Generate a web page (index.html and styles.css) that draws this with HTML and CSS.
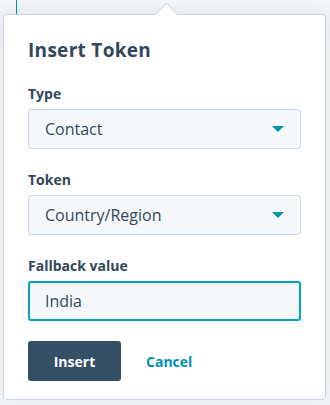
FILE: index.html
```html
<!DOCTYPE html>
<html lang="en">
<head>
    <meta charset="UTF-8">
    <meta name="viewport" content="width=device-width, initial-scale=1.0">
    <title>Insert Token</title>
    <link rel="stylesheet" href="styles.css">
</head>
<body>
    <div class="backdrop">
        <div class="edge-line"></div>
    </div>

    <div class="popover">
        <h2 class="title">Insert Token</h2>

        <div class="field">
            <label class="label">Type</label>
            <div class="select">
                <span>Contact</span>
                <span class="caret"></span>
            </div>
        </div>

        <div class="field">
            <label class="label">Token</label>
            <div class="select">
                <span>Country/Region</span>
                <span class="caret"></span>
            </div>
        </div>

        <div class="field">
            <label class="label" for="fallback">Fallback value</label>
            <input class="input" id="fallback" type="text" value="India">
        </div>

        <div class="actions">
            <button class="btn-primary">Insert</button>
            <button class="btn-link">Cancel</button>
        </div>
    </div>
</body>
</html>
```

FILE: styles.css
```css
body {
    margin: 0;
    width: 330px;
    height: 405px;
    background-color: #f2f4f6;
    font-family: 'Open Sans', sans-serif;
    color: #33475b;
    position: relative;
    overflow: hidden;
}
.backdrop {
    position: absolute;
    top: 0;
    left: 0;
    width: 100%;
    height: 100%;
    background: linear-gradient(180deg, #f6f8fa, #eef2f6 15px, #f4f5f7 60px);
}
.edge-line {
    position: absolute;
    top: 0;
    left: 16px;
    width: 1px;
    height: 15px;
    background-color: #0091ae;
}
.popover {
    position: absolute;
    top: 14px;
    left: 3px;
    width: 323px;
    height: 386px;
    background-color: #fff;
    border: 1px solid #cbd6e2;
    border-radius: 4px;
    box-shadow: 0 1px 24px rgba(45, 62, 80, 0.08);
    padding: 0 24px;
    box-sizing: border-box;
}
.popover::before {
    content: "";
    position: absolute;
    top: -9px;
    left: 154px;
    width: 16px;
    height: 16px;
    background-color: #fff;
    border-top: 1px solid #cbd6e2;
    border-left: 1px solid #cbd6e2;
    transform: rotate(45deg);
}
.title {
    margin: 21px 0 20px;
    font-size: 19px;
    font-weight: 700;
    line-height: 28px;
    letter-spacing: 0.3px;
}
.field {
    display: flex;
    flex-direction: column;
    margin-bottom: 21px;
}
.label {
    font-size: 14px;
    font-weight: 700;
    line-height: 20px;
    margin-bottom: 5px;
}
.select, .input {
    height: 40px;
    box-sizing: border-box;
    background-color: #f5f8fa;
    border: 1px solid #cbd6e2;
    border-radius: 3px;
    font-family: inherit;
    font-size: 16px;
    color: #33475b;
}
.select {
    display: flex;
    align-items: center;
    justify-content: space-between;
    padding: 0 16px 0 16px;
}
.caret {
    width: 0;
    height: 0;
    border-left: 6px solid transparent;
    border-right: 6px solid transparent;
    border-top: 6px solid #0091ae;
}
.input {
    border: 2px solid #00a4bd;
    padding: 0 15px;
    outline: none;
}
.actions {
    display: flex;
    align-items: center;
    gap: 25px;
    margin-top: -1px;
}
.btn-primary {
    width: 93px;
    height: 40px;
    background-color: #354f65;
    color: #fff;
    border: none;
    border-radius: 3px;
    font-family: inherit;
    font-size: 14px;
    font-weight: 700;
}
.btn-link {
    background: none;
    border: none;
    padding: 0;
    color: #0091ae;
    font-family: inherit;
    font-size: 14px;
    font-weight: 700;
}
```
